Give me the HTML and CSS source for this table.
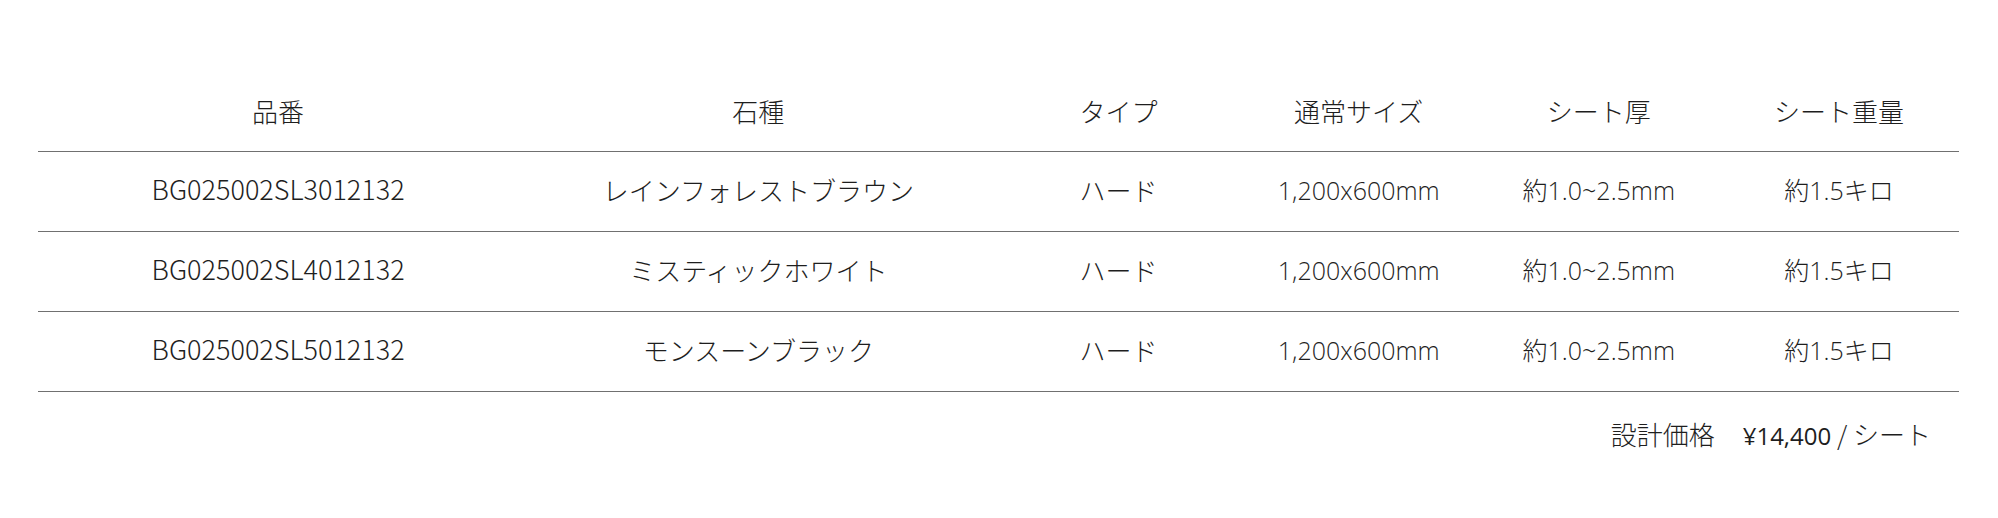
FILE: index.html
```html
<!DOCTYPE html>
<html lang="ja">
<head>
<meta charset="utf-8">
<title>製品仕様</title>
<link rel="stylesheet" href="styles.css">
</head>
<body>
<div class="wrap">
  <table class="spec">
    <colgroup>
      <col class="c-wide"><col class="c-wide"><col class="c-narrow"><col class="c-narrow"><col class="c-narrow"><col class="c-narrow">
    </colgroup>
    <thead>
      <tr>
        <th>品番</th>
        <th>石種</th>
        <th>タイプ</th>
        <th>通常サイズ</th>
        <th>シート厚</th>
        <th>シート重量</th>
      </tr>
    </thead>
    <tbody>
      <tr>
        <td class="code">BG025002SL3012132</td>
        <td>レインフォレストブラウン</td>
        <td>ハード</td>
        <td class="num">1,200x600mm</td>
        <td class="num">約1.0~2.5mm</td>
        <td class="num">約1.5キロ</td>
      </tr>
      <tr>
        <td class="code">BG025002SL4012132</td>
        <td>ミスティックホワイト</td>
        <td>ハード</td>
        <td class="num">1,200x600mm</td>
        <td class="num">約1.0~2.5mm</td>
        <td class="num">約1.5キロ</td>
      </tr>
      <tr>
        <td class="code">BG025002SL5012132</td>
        <td>モンスーンブラック</td>
        <td>ハード</td>
        <td class="num">1,200x600mm</td>
        <td class="num">約1.0~2.5mm</td>
        <td class="num">約1.5キロ</td>
      </tr>
    </tbody>
  </table>
  <p class="price"><span class="price-label">設計価格</span><span class="price-value">¥14,400</span><span class="price-unit"> / シート</span></p>
</div>
</body>
</html>
```

FILE: styles.css
```css
html, body {
  margin: 0;
  padding: 0;
  background: #ffffff;
}

body {
  font-family: "Noto Sans CJK JP", sans-serif;
  font-weight: 300;
  color: #1e1e1e;
}

.wrap {
  padding: 72px 39px 0 38px;
}

.spec {
  width: 100%;
  border-collapse: collapse;
  table-layout: fixed;
}

.c-wide {
  width: 25%;
}

.c-narrow {
  width: 12.5%;
}

.spec th,
.spec td {
  height: 75px;
  padding: 0 0 4px;
  text-align: center;
  vertical-align: middle;
  font-size: 26px;
  font-weight: 300;
  line-height: 1.2;
  border-bottom: 1px solid #707070;
  white-space: nowrap;
}

.spec th {
  height: 77px;
  padding-bottom: 2px;
}

.spec td.code {
  font-size: 27px;
}

.spec td.num {
  font-family: "Open Sans", "Noto Sans CJK JP", sans-serif;
  font-size: 25px;
  font-weight: 300;
}

.price {
  margin: 22px 0 0;
  padding-right: 28px;
  text-align: right;
  font-size: 26px;
  line-height: 40px;
}

.price-label {
  margin-right: 28px;
}

.price-value {
  font-family: "Open Sans", "Noto Sans CJK JP", sans-serif;
  font-size: 24px;
  font-weight: 500;
}

.price-unit {
  font-size: 26px;
}
```
